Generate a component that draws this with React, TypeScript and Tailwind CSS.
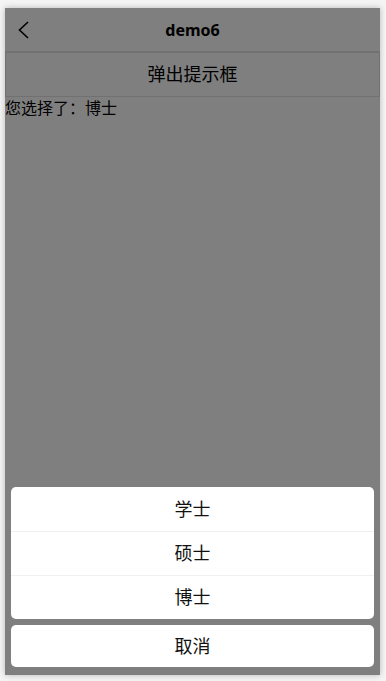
const options = ["学士", "硕士", "博士"];

export default function App() {
  return (
    <div
      className="min-h-screen bg-[#f4f4f4] pt-[8px] pl-[5px]"
      style={{ fontFamily: '"Noto Sans", "Noto Sans CJK SC", sans-serif' }}
    >
      <div className="relative h-[667px] w-[375px] overflow-hidden bg-white shadow-[0_0_6px_rgba(0,0,0,0.25)]">
        {/* page */}
        <header className="relative flex h-[44px] items-center justify-center border-b border-[#e4e4e4]">
          <svg
            className="absolute left-[13px] top-[13px] h-[18px] w-[12px]"
            viewBox="0 0 12 18"
            fill="none"
            stroke="#000"
            strokeWidth={1.6}
          >
            <path d="M10 1 L1.5 9 L10 17" />
          </svg>
          <h1 className="text-[16px] font-bold text-black">demo6</h1>
        </header>
        <button className="flex h-[45px] w-full items-center justify-center border border-[#e2e2e2] bg-white text-[18px] text-black">
          弹出提示框
        </button>
        <p className="text-[16px] leading-[22px] text-black">您选择了：博士</p>

        {/* mask */}
        <div className="absolute inset-0 bg-black/50" />

        {/* action sheet */}
        <div className="absolute inset-x-[6px] bottom-[8px] flex flex-col gap-[6px]">
          <div className="overflow-hidden rounded-[5px] bg-white">
            {options.map((o, i) => (
              <div
                key={o}
                className={
                  i === 0
                    ? "flex h-[44px] items-center justify-center text-[18px] text-[#111]"
                    : "flex h-[44px] items-center justify-center border-t border-[#f0f0f0] text-[18px] text-[#111]"
                }
              >
                {o}
              </div>
            ))}
          </div>
          <div className="flex h-[42px] items-center justify-center rounded-[5px] bg-white text-[18px] text-[#111]">
            取消
          </div>
        </div>
      </div>
    </div>
  );
}
